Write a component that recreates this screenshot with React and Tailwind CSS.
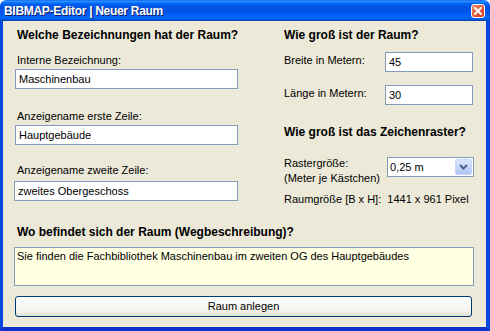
import React from 'react';

const font = { fontFamily: '"Liberation Sans", Arial, sans-serif' };

const TextBox = ({ value, className = '' }) => (
    <div className={`h-[20px] border border-[#7f9db9] bg-white flex items-center px-[3px] text-[11px] text-black ${className}`}>
        {value}
    </div>
);

const Heading = ({ children, className = '' }) => (
    <div className={`text-[12px] leading-[14px] font-bold text-black whitespace-nowrap ${className}`}>{children}</div>
);

const Label = ({ children, className = '' }) => (
    <div className={`text-[11px] leading-[13px] text-black whitespace-nowrap ${className}`}>{children}</div>
);

const App = () => {
    return (
        <div className="w-[490px] h-[331px] flex flex-col overflow-hidden" style={font}>
            {/* title bar */}
            <div className="h-[21px] shrink-0 flex items-center justify-between pl-[4px] pr-[5px] rounded-t-[6px] bg-[linear-gradient(to_bottom,#0058ee_0%,#3593ff_5%,#288eff_8%,#127dff_11%,#036ffc_14%,#0262ee_20%,#0057e5_28%,#0054e3_35%,#0055eb_60%,#005bf5_70%,#026afe_80%,#0062ef_88%,#0052d6_94%,#0040ab_100%)]">
                <span className="text-white font-bold text-[12px] tracking-[-0.3px] leading-none pt-[1px] [text-shadow:1px_1px_0_#0a1e6e]">
                    BIBMAP-Editor | Neuer Raum
                </span>
                <div className="w-[14px] h-[14px] mt-[1px] rounded-[3px] border border-white bg-[linear-gradient(135deg,#f08a6a,#e2512f_60%,#c8401f)] flex items-center justify-center">
                    <svg width="8" height="8" viewBox="0 0 8 8">
                        <path d="M1 1 L7 7 M7 1 L1 7" stroke="white" strokeWidth="2" strokeLinecap="square" />
                    </svg>
                </div>
            </div>

            {/* body */}
            <div className="flex-1 bg-[#ece9d8] border-l-[3px] border-r-[4px] border-b-[4px] border-[#0846e0] border-b-[#0a32c8] flex flex-col">
                <div className="flex">
                    {/* left column */}
                    <div className="ml-[12px] w-[223px] pt-[7px] flex flex-col">
                        <Heading className="ml-[2px]">Welche Bezeichnungen hat der Raum?</Heading>
                        <Label className="ml-[2px] mt-[12px]">Interne Bezeichnung:</Label>
                        <TextBox className="mt-[2px]" value="Maschinenbau" />
                        <Label className="ml-[2px] mt-[21px]">Anzeigename erste Zeile:</Label>
                        <TextBox className="mt-[2px]" value="Hauptgebäude" />
                        <Label className="ml-[2px] mt-[19px]">Anzeigename zweite Zeile:</Label>
                        <TextBox className="mt-[4px] -ml-[1px]" value="zweites Obergeschoss" />
                    </div>

                    {/* right column */}
                    <div className="ml-[46px] w-[190px] pt-[7px] flex flex-col">
                        <Heading>Wie groß ist der Raum?</Heading>
                        <div className="mt-[10px] flex items-start">
                            <Label className="w-[101px] pt-[2px]">Breite in Metern:</Label>
                            <TextBox className="w-[88px]" value="45" />
                        </div>
                        <div className="mt-[13px] flex items-start">
                            <Label className="w-[101px] pt-[2px]">Länge in Metern:</Label>
                            <TextBox className="w-[88px]" value="30" />
                        </div>
                        <Heading className="mt-[20px]">Wie groß ist das Zeichenraster?</Heading>
                        <div className="mt-[17px] flex items-start">
                            <div className="w-[103px] text-[11px] leading-[15px] text-black whitespace-nowrap">
                                Rastergröße:<br />(Meter je Kästchen)
                            </div>
                            <div className="mt-[1px] w-[87px] h-[20px] border border-[#7f9db9] bg-white flex items-center justify-between pl-[2px] pr-[1px] text-[11px]">
                                <span>0,25 m</span>
                                <div className="w-[17px] h-[16px] rounded-[2px] bg-[linear-gradient(to_bottom,#dbe6fe,#c1d3fb_60%,#b0c6f6)] border border-[#c7d6f8] flex items-center justify-center">
                                    <svg width="9" height="6" viewBox="0 0 9 6">
                                        <path d="M1 1 L4.5 4.5 L8 1" stroke="#4d6185" strokeWidth="2" fill="none" />
                                    </svg>
                                </div>
                            </div>
                        </div>
                        <Label className="mt-[7px]">Raumgröße [B x H]:&nbsp;&nbsp;1441 x 961 Pixel</Label>
                    </div>
                </div>

                {/* bottom */}
                <Heading className="ml-[14px] mt-[19px]">Wo befindet sich der Raum (Wegbeschreibung)?</Heading>
                <div className="ml-[11px] mt-[8px] w-[460px] h-[39px] border border-[#7f9db9] bg-[#ffffe1] pl-[2px] pt-[2px] text-[11px] leading-[13px] text-black">
                    Sie finden die Fachbibliothek Maschinenbau im zweiten OG des Hauptgebäudes
                </div>
                <button className="ml-[12px] mt-[10px] w-[457px] h-[21px] rounded-[3px] border border-[#003c74] bg-[linear-gradient(to_bottom,#ffffff,#f4f3ee_70%,#e3dfd3)] text-[11px] text-black flex items-center justify-center">
                    Raum anlegen
                </button>
            </div>
        </div>
    );
};

export default App;
